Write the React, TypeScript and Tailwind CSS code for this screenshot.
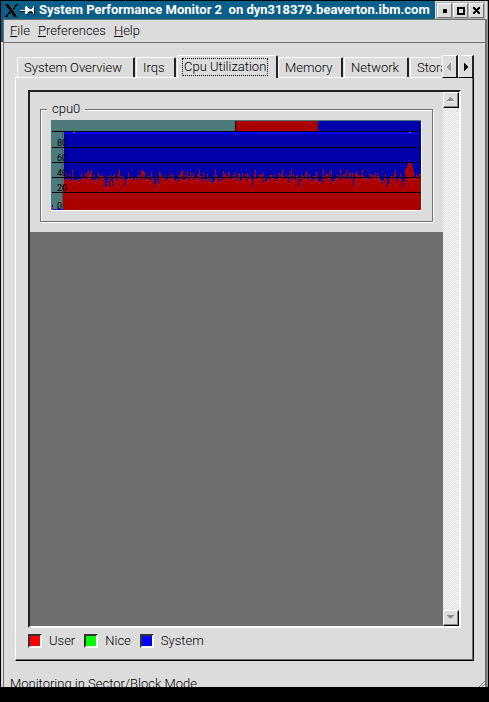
import { useState, type ReactNode } from "react";

const BASE36 = 36;

// One base-36 digit per column: the height at which the user-time area starts.
const USER_SAMPLES =
  "jdikifkjajjkijlijeiihejcbfdajjflijdjfgghjqqlgqfkpgejhkdajgihjpkidiihhkjhjhgfjacbcjijgikdhjqnhlncdghhkfijhfidhf" +
  "jkilfkebbjjfibkgchgdjhjheagjldijkekhlinljafilhkhjbfdgiceijhfhdkhedkjdhhfkdifhjpieaiihffemehlkhijffhiekiihdhea" +
  "gihfimfiakeijgfqhlfghidbjiehkikgjcflklinagiefhdlakmiihfhkajhfeiaiiddidpjecefgifagjhhiieifgfhdidghkjnkheiqnihg" +
  "jgdailiheiqklnedklgiihhhfgieedbfiieeaiklebcdcfkkighhg";

const COLUMNS = 357;
const LATE_PEAK = [50, 48, 46, 43, 43, 44, 43, 47, 51];

function columnTop(i: number) {
  const digit = parseInt(USER_SAMPLES[i % USER_SAMPLES.length], BASE36);
  const x = i + 13;
  if (x >= 354 && x <= 362) {
    return LATE_PEAK[x - 354];
  }
  return digit + (digit >= 17 ? 41 : 40);
}

const LEVELS = [
  { label: "80", line: 27, text: 26 },
  { label: "60", line: 42, text: 41 },
  { label: "40", line: 57, text: 56 },
  { label: "20", line: 72, text: 71 },
];

function CpuGraph() {
  const columns = Array.from({ length: COLUMNS }, (_, i) => columnTop(i));
  return (
    <svg
      viewBox="0 0 370 90"
      preserveAspectRatio="none"
      shapeRendering="crispEdges"
      className="block h-[90px] w-full font-normal"
      role="img"
      aria-label="cpu0 utilization history"
    >
      <rect width="370" height="90" fill="#4c7a7a" />
      <rect x="184" y="1" width="1" height="10" fill="#000" />
      <rect x="185" y="1" width="82" height="10" fill="#aa0000" />
      <rect x="267" y="1" width="103" height="10" fill="#0000aa" />
      <rect x="369" y="1" width="1" height="10" fill="#0000ff" />
      <rect x="11" y="12" width="1" height="77" fill="#555" />
      <rect x="13" y="12" width="357" height="78" fill="#0000aa" />
      <rect x="13" y="12" width="357" height="2" fill="#0000ff" />
      <rect x="22" y="12" width="2" height="1" fill="#4c7a7a" />
      <rect x="358" y="12" width="2" height="1" fill="#4c7a7a" />
      <path d="M12 90V65h1v25z" fill="#aa0000" />
      <path d={columns.map((t, i) => `M${i + 13} 90V${t}h1V90z`).join("")} fill="#aa0000" />
      <path d={columns.map((t, i) => `M${i + 13} ${t}h1v1h-1z`).join("")} fill="#e00000" />
      <path d="M1 85h1v2h-1zM1 89h11v1h-11zM7 88h2v1h-2z" fill="#0000ff" />
      <path d="M1 87h1v3h-1z" fill="#ff0000" />
      <rect x="1" y="11" width="369" height="1" fill="#000" />
      {LEVELS.map((l) => (
        <g key={l.label}>
          <rect x="1" y={l.line} width="369" height="1" fill="#000" />
          <text x="16" y={l.text} textAnchor="end" fontFamily="Roboto, sans-serif" fontSize="9">
            {l.label}
          </text>
        </g>
      ))}
      <text x="11" y="89" textAnchor="end" fontFamily="Roboto, sans-serif" fontSize="9">
        0
      </text>
    </svg>
  );
}

const TABS = [
  { name: "System Overview", width: "w-[118px]" },
  { name: "Irqs", width: "w-10" },
  { name: "Cpu Utilization", width: "w-[101px]" },
  { name: "Memory", width: "w-[65px]" },
  { name: "Network", width: "w-[65px]" },
  { name: "Storage", width: "w-[65px]" },
];

function TabBar() {
  const [active, setActive] = useState("Cpu Utilization");
  return (
    <div className="relative z-10 flex h-[23px] pl-0.5">
      <div role="tablist" className="flex min-w-0 flex-1 items-end overflow-hidden">
        {TABS.map((t) =>
          t.name === active ? (
            <button
              key={t.name}
              role="tab"
              aria-selected="true"
              className={`${t.width} flex h-[23px] shrink-0 rounded-t-xs border-t border-r-2 border-l border-t-white border-r-[#222] border-l-white bg-[#dcdcdc] pt-0.5 pl-1`}
            >
              <span className="h-[18px] border border-dotted border-black px-px leading-[15px]">{t.name}</span>
            </button>
          ) : (
            <button
              key={t.name}
              role="tab"
              aria-selected="false"
              onClick={() => setActive(t.name)}
              className={`${t.width} mr-px mb-px h-5 shrink-0 rounded-t-xs border-t border-r-2 border-l border-t-white border-r-[#222] border-l-white pl-1.5 text-left leading-[18px]`}
            >
              {t.name}
            </button>
          ),
        )}
      </div>
      <StepButton label="Scroll tabs left">
        <path d="M8 4v8h-1v-1h-1v-1h-1v-1h-1v-2h1v-1h1v-1h1v-1z" fill="#999" />
      </StepButton>
      <StepButton label="Scroll tabs right">
        <path d="M5 4v8h1v-1h1v-1h1v-1h1v-2h-1v-1h-1v-1h-1v-1z" fill="#000" />
      </StepButton>
    </div>
  );
}

function StepButton({ label, children }: { label: string; children: ReactNode }) {
  return (
    <button
      aria-label={label}
      className="flex w-4 shrink-0 items-center justify-center border-t border-r-2 border-b border-l border-t-white border-r-[#222] border-b-black border-l-white bg-[#dcdcdc]"
    >
      <svg width="13" height="16" viewBox="0 0 13 16" shapeRendering="crispEdges" className="shrink-0">
        {children}
      </svg>
    </button>
  );
}

function ScrollArrow({ up = false }: { up?: boolean }) {
  return (
    <button
      aria-label={up ? "Scroll up" : "Scroll down"}
      className="flex h-4 w-4 items-center justify-center border border-t-white border-r-black border-b-black border-l-white bg-[#dcdcdc] shadow-[inset_-1px_-1px_#888]"
    >
      <svg width="8" height="6" viewBox="0 0 8 6" shapeRendering="crispEdges">
        {up ? (
          <>
            <path d="M1 4h7v1h-7z" fill="#fff" />
            <path d="M3 0h1v1h1v1h1v1h1v1h-7v-1h1v-1h1v-1h1z" fill="#8c8c8c" />
          </>
        ) : (
          <>
            <path d="M7 1h1v1h-1v1h-1v1h-1v1h-1v-1h1v-1h1v-1h1z" fill="#fff" />
            <path d="M0 0h7v1h-1v1h-1v1h-1v1h-1v-1h-1v-1h-1v-1h-1z" fill="#8c8c8c" />
          </>
        )}
      </svg>
    </button>
  );
}

function Legend({ color, label }: { color: string; label: string }) {
  return (
    <span className="flex items-center gap-[7px]">
      <span
        className={`${color} h-3.5 w-3.5 border-2 border-t-[#333] border-r-white border-b-white border-l-[#333]`}
      />
      {label}
    </span>
  );
}

function TitleButton({ label, children }: { label: string; children: ReactNode }) {
  return (
    <button
      aria-label={label}
      className="flex h-[15px] w-[15px] items-center justify-center border border-t-white border-r-[#777] border-b-[#777] border-l-white bg-[#dcdcdc] shadow-[0_0_0_1px_#aaa]"
    >
      <svg width="9" height="9" viewBox="0 0 9 9" shapeRendering="crispEdges">
        {children}
      </svg>
    </button>
  );
}

function TitleBar() {
  return (
    <header className="flex h-[18px] shrink-0 items-center bg-[#0a5f8a] text-white">
      <svg width="34" height="16" viewBox="0 0 34 16" className="ml-1 shrink-0" shapeRendering="crispEdges" aria-hidden="true">
        <path d="M0 2h4l9 13H9z" fill="#000" />
        <path d="M12 2L7 8M5 10L1 15" stroke="#000" strokeWidth="2" />
        <path d="M4 2l9 13M11 2L6 8" stroke="#54899f" strokeWidth="0.5" />
        <path d="M15 9h6v1h-6zM22 12h1v1h-1zM23 10h5v1h-5zM29 5h1v8h-2v-1h1z" fill="#000" />
        <path d="M15 8h6v1h-6zM20 4h2v1h1v1h1v1h3V6h1V4h1v8h-1v-2h-1V9h-3v1h-1v1h-1v1h-2z" fill="#fff" />
      </svg>
      <h1 className="min-w-0 flex-1 text-[13px] font-bold whitespace-pre">
        System Performance Monitor 2  on dyn318379.beaverton.ibm.com
      </h1>
      <div className="flex h-full items-center gap-px bg-[#dcdcdc] pr-[3px] pl-0.5">
        <TitleButton label="Minimize">
          <path d="M3 3h4v4H3z" fill="#000" />
        </TitleButton>
        <TitleButton label="Maximize">
          <path d="M2 2h6v6H2z" fill="none" stroke="#000" strokeWidth="2" />
        </TitleButton>
        <TitleButton label="Close">
          <path d="M1 1h2v1h1v1h1V2h1V1h2v2H7v1H6v1h1v1h1v2H6V7H5V6H4v1H3v1H1V6h1V5h1V4H2V3H1z" fill="#000" />
        </TitleButton>
      </div>
    </header>
  );
}

export default function App() {
  return (
    <div className="flex h-screen flex-col bg-black pt-px pr-px pb-[15px] pl-px font-[Roboto,'Liberation_Sans',sans-serif] text-[13px] font-light text-black">
      <div className="flex min-h-0 flex-1 flex-col overflow-hidden border-r border-r-[#999] bg-[#dcdcdc]">
        <TitleBar />
        <div className="flex min-h-0 flex-1 flex-col bg-[linear-gradient(#0a5f8a_23px,#dcdcdc_23px)] pl-0.5">
          <div className="flex min-h-0 flex-1 flex-col border-t border-r-2 border-l border-t-[#707070] border-r-[#707070] border-l-[#707070] bg-[#dcdcdc]">
            <nav className="flex h-[23px] shrink-0 items-center gap-2 border-b border-[#707070] pl-1.5">
              <button>
                <u>F</u>ile
              </button>
              <button>
                <u>P</u>references
              </button>
              <button>
                <u>H</u>elp
              </button>
            </nav>
            <main className="flex min-h-0 flex-1 flex-col px-[11px] pt-3">
              <TabBar />
              <section className="-mt-px flex min-h-0 flex-1 flex-col border border-t-white border-r-black border-b-black border-l-white px-3 pt-3 shadow-[inset_-1px_-1px_#707070]">
                <div className="flex min-h-0 flex-1 border-2 border-t-[#222] border-r-white border-b-white border-l-[#222]">
                  <div className="min-w-0 flex-1 bg-[#6e6e6e]">
                    <div className="h-[140px] bg-[#dcdcdc] px-2.5 pt-2">
                      <fieldset className="h-[122px] border border-[#707070] px-2.5 pt-px shadow-[1px_1px_#fff,inset_1px_1px_#fff]">
                        <legend className="-ml-1 h-[19px] bg-[#dcdcdc] px-[5px] leading-[18px]">cpu0</legend>
                        <div className="border-r border-b border-white">
                          <CpuGraph />
                        </div>
                      </fieldset>
                    </div>
                  </div>
                  <div className="flex w-4 shrink-0 flex-col justify-between bg-[repeating-conic-gradient(#fff_0_25%,#dcdcdc_0_50%)] bg-[length:2px_2px]">
                    <ScrollArrow up />
                    <ScrollArrow />
                  </div>
                </div>
                <div className="flex h-8 shrink-0 items-center gap-[9px] pb-1.5">
                  <Legend color="bg-[#ff0000]" label="User" />
                  <Legend color="bg-[#00ff00]" label="Nice" />
                  <Legend color="bg-[#0000ff]" label="System" />
                </div>
              </section>
            </main>
            <footer className="flex h-[26px] shrink-0 items-end justify-between pl-1.5">
              <p className="h-3 overflow-hidden leading-[18px]">Monitoring in Sector/Block Mode</p>
              <svg width="6" height="6" viewBox="0 0 6 6" aria-hidden="true">
                <path d="M0 6L6 0M3 6L6 3" stroke="#707070" />
                <path d="M1 6L6 1M4 6L6 4" stroke="#fff" />
              </svg>
            </footer>
          </div>
        </div>
      </div>
    </div>
  );
}
